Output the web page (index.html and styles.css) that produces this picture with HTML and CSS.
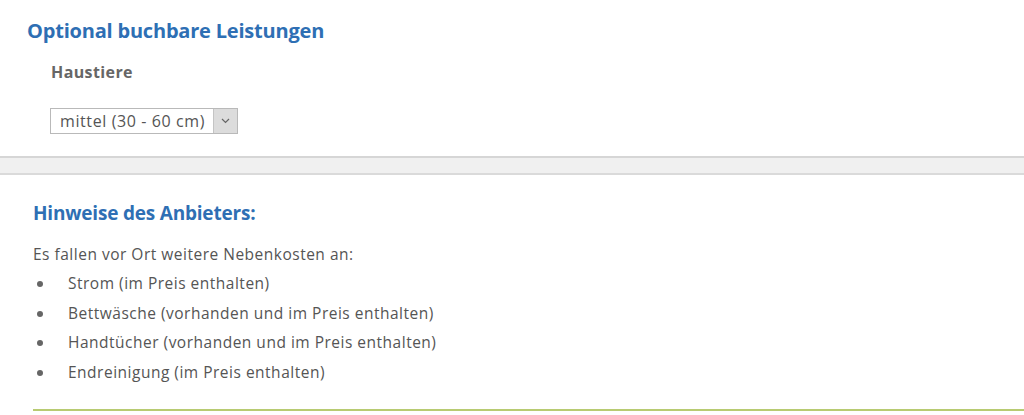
FILE: index.html
```html
<!DOCTYPE html>
<html lang="de">
<head>
<meta charset="utf-8">
<link rel="stylesheet" href="styles.css">
</head>
<body>
<section class="optional">
  <h2 class="title">Optional buchbare Leistungen</h2>
  <div class="field">
    <div class="label">Haustiere</div>
    <div class="select">
      <span class="select-value">mittel (30 - 60 cm)</span>
      <span class="select-btn"><svg width="9" height="6" viewBox="0 0 9 6"><path d="M1 1 L4.5 4.5 L8 1" fill="none" stroke="#666" stroke-width="1.2"/></svg></span>
    </div>
  </div>
</section>
<div class="divider"></div>
<section class="notes">
  <h2 class="title notes-title">Hinweise des Anbieters:</h2>
  <p class="intro">Es fallen vor Ort weitere Nebenkosten an:</p>
  <ul class="list">
    <li>Strom (im Preis enthalten)</li>
    <li>Bettwäsche (vorhanden und im Preis enthalten)</li>
    <li>Handtücher (vorhanden und im Preis enthalten)</li>
    <li>Endreinigung (im Preis enthalten)</li>
  </ul>
  <div class="rule"></div>
</section>
</body>
</html>
```
FILE: styles.css
```css
html, body {
  margin: 0;
  padding: 0;
  background: #fff;
  font-family: "Open Sans", "Noto Sans", sans-serif;
  color: #555;
}
.optional {
  padding: 17px 0 0 27px;
  height: 139px;
  box-sizing: border-box;
}
.title {
  margin: 0;
  font-size: 20px;
  font-weight: 700;
  color: #2e6fb4;
  line-height: 28px;
  letter-spacing: -0.2px;
}
.field {
  padding: 16px 0 0 24px;
}
.label {
  font-size: 16px;
  font-weight: 700;
  color: #666;
  line-height: 22px;
  letter-spacing: 0.4px;
}
.select {
  margin: 25px 0 0 -1px;
  display: inline-flex;
  border: 1px solid #b9b9b9;
  height: 26px;
  box-sizing: border-box;
}
.select-value {
  font-size: 16px;
  letter-spacing: 0.6px;
  line-height: 24px;
  padding: 0 8px 0 9px;
  color: #555;
  width: 145px;
  white-space: nowrap;
}
.select-btn {
  width: 23px;
  background: #dcdcdc;
  border-left: 1px solid #c4c4c4;
  display: flex;
  align-items: center;
  justify-content: center;
}
.divider {
  margin-top: 17px;
  height: 19px;
  box-sizing: border-box;
  background: #f0f0f0;
  border-top: 2px solid #d6d6d6;
  border-bottom: 2px solid #dadada;
}
.notes {
  padding: 24px 0 0 33px;
}
.notes-title {
  font-size: 19px;
}
.intro {
  margin: 16px 0 0;
  font-size: 15.5px;
  letter-spacing: 0.5px;
  line-height: 22px;
}
.list {
  margin: 4px 0 0;
  padding: 0;
  list-style: none;
}
.list li {
  position: relative;
  padding-left: 35px;
  font-size: 15.5px;
  letter-spacing: 0.5px;
  line-height: 29.5px;
}
.list li::before {
  content: "";
  position: absolute;
  left: 4px;
  top: 12px;
  width: 6px;
  height: 6px;
  border-radius: 50%;
  background: #666;
}
.rule {
  margin-top: 22px;
  border-top: 2px solid #b8cb72;
}
```
